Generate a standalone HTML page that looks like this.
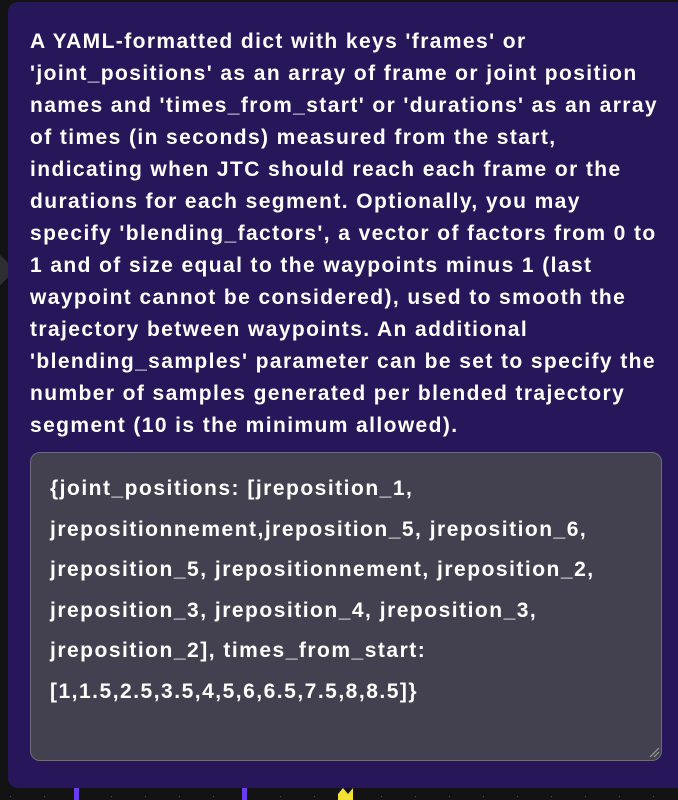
<!DOCTYPE html>
<html><head><meta charset="utf-8"><style>
html,body{margin:0;padding:0;width:678px;height:800px;background:#131313;overflow:hidden;font-family:"Liberation Sans",sans-serif;}
.arrow{position:absolute;left:-14px;top:258px;width:22px;height:30px;background:#2e2e33;transform:rotate(45deg);}
.panel{position:absolute;left:8px;top:2px;width:690px;height:786px;background:#27175a;border-radius:10px;}
.txt{position:absolute;left:30px;top:26px;color:#fff;font-weight:bold;font-size:21px;line-height:32px;white-space:nowrap;letter-spacing:1.4px;}
.ta{position:absolute;left:30px;top:452px;width:630px;height:307px;background:#43414f;border:1px solid #6e6b7c;border-radius:10px;}
.tt{position:absolute;left:50px;top:469px;color:#fff;font-weight:bold;font-size:21px;line-height:40.5px;white-space:nowrap;letter-spacing:1.5px;}
.bot{position:absolute;top:788px;left:0;width:678px;height:12px;}
</style></head><body>
<div class="arrow"></div>
<div class="panel"></div>
<div class="txt">A YAML-formatted dict with keys 'frames' or<br>'joint_positions' as an array of frame or joint position<br>names and 'times_from_start' or 'durations' as an array<br>of times (in seconds) measured from the start,<br>indicating when JTC should reach each frame or the<br>durations for each segment. Optionally, you may<br>specify 'blending_factors', a vector of factors from 0 to<br>1 and of size equal to the waypoints minus 1 (last<br>waypoint cannot be considered), used to smooth the<br>trajectory between waypoints. An additional<br>'blending_samples' parameter can be set to specify the<br>number of samples generated per blended trajectory<br>segment (10 is the minimum allowed).</div>
<div class="ta"></div>
<div class="tt">{joint_positions: [jreposition_1,<br>jrepositionnement,jreposition_5, jreposition_6,<br>jreposition_5, jrepositionnement, jreposition_2,<br>jreposition_3, jreposition_4, jreposition_3,<br>jreposition_2], times_from_start:<br>[1,1.5,2.5,3.5,4,5,6,6.5,7.5,8,8.5]}</div>
<svg style="position:absolute;left:648px;top:746px" width="12" height="12"><path d="M2 11L11 2M6 11L11 6" stroke="#999" stroke-width="1.2"/></svg>
<svg class="bot" width="678" height="12">
<rect x="74" y="0" width="5" height="12" fill="#6a3cf0"/>
<rect x="242" y="0" width="5" height="12" fill="#6a3cf0"/>
<path d="M338 6L343 0L348 6L353 0L353 12L338 12Z" fill="#f5e034"/>
<g fill="#555"><rect x="10" y="8" width="1" height="1"/><rect x="44" y="8" width="1" height="1"/><rect x="111" y="8" width="1" height="1"/><rect x="145" y="8" width="1" height="1"/><rect x="179" y="8" width="1" height="1"/><rect x="213" y="8" width="1" height="1"/><rect x="280" y="8" width="1" height="1"/><rect x="314" y="8" width="1" height="1"/><rect x="381" y="8" width="1" height="1"/><rect x="415" y="8" width="1" height="1"/><rect x="449" y="8" width="1" height="1"/><rect x="483" y="8" width="1" height="1"/><rect x="517" y="8" width="1" height="1"/><rect x="551" y="8" width="1" height="1"/><rect x="585" y="8" width="1" height="1"/><rect x="619" y="8" width="1" height="1"/><rect x="653" y="8" width="1" height="1"/></g>
</svg>
</body></html>
